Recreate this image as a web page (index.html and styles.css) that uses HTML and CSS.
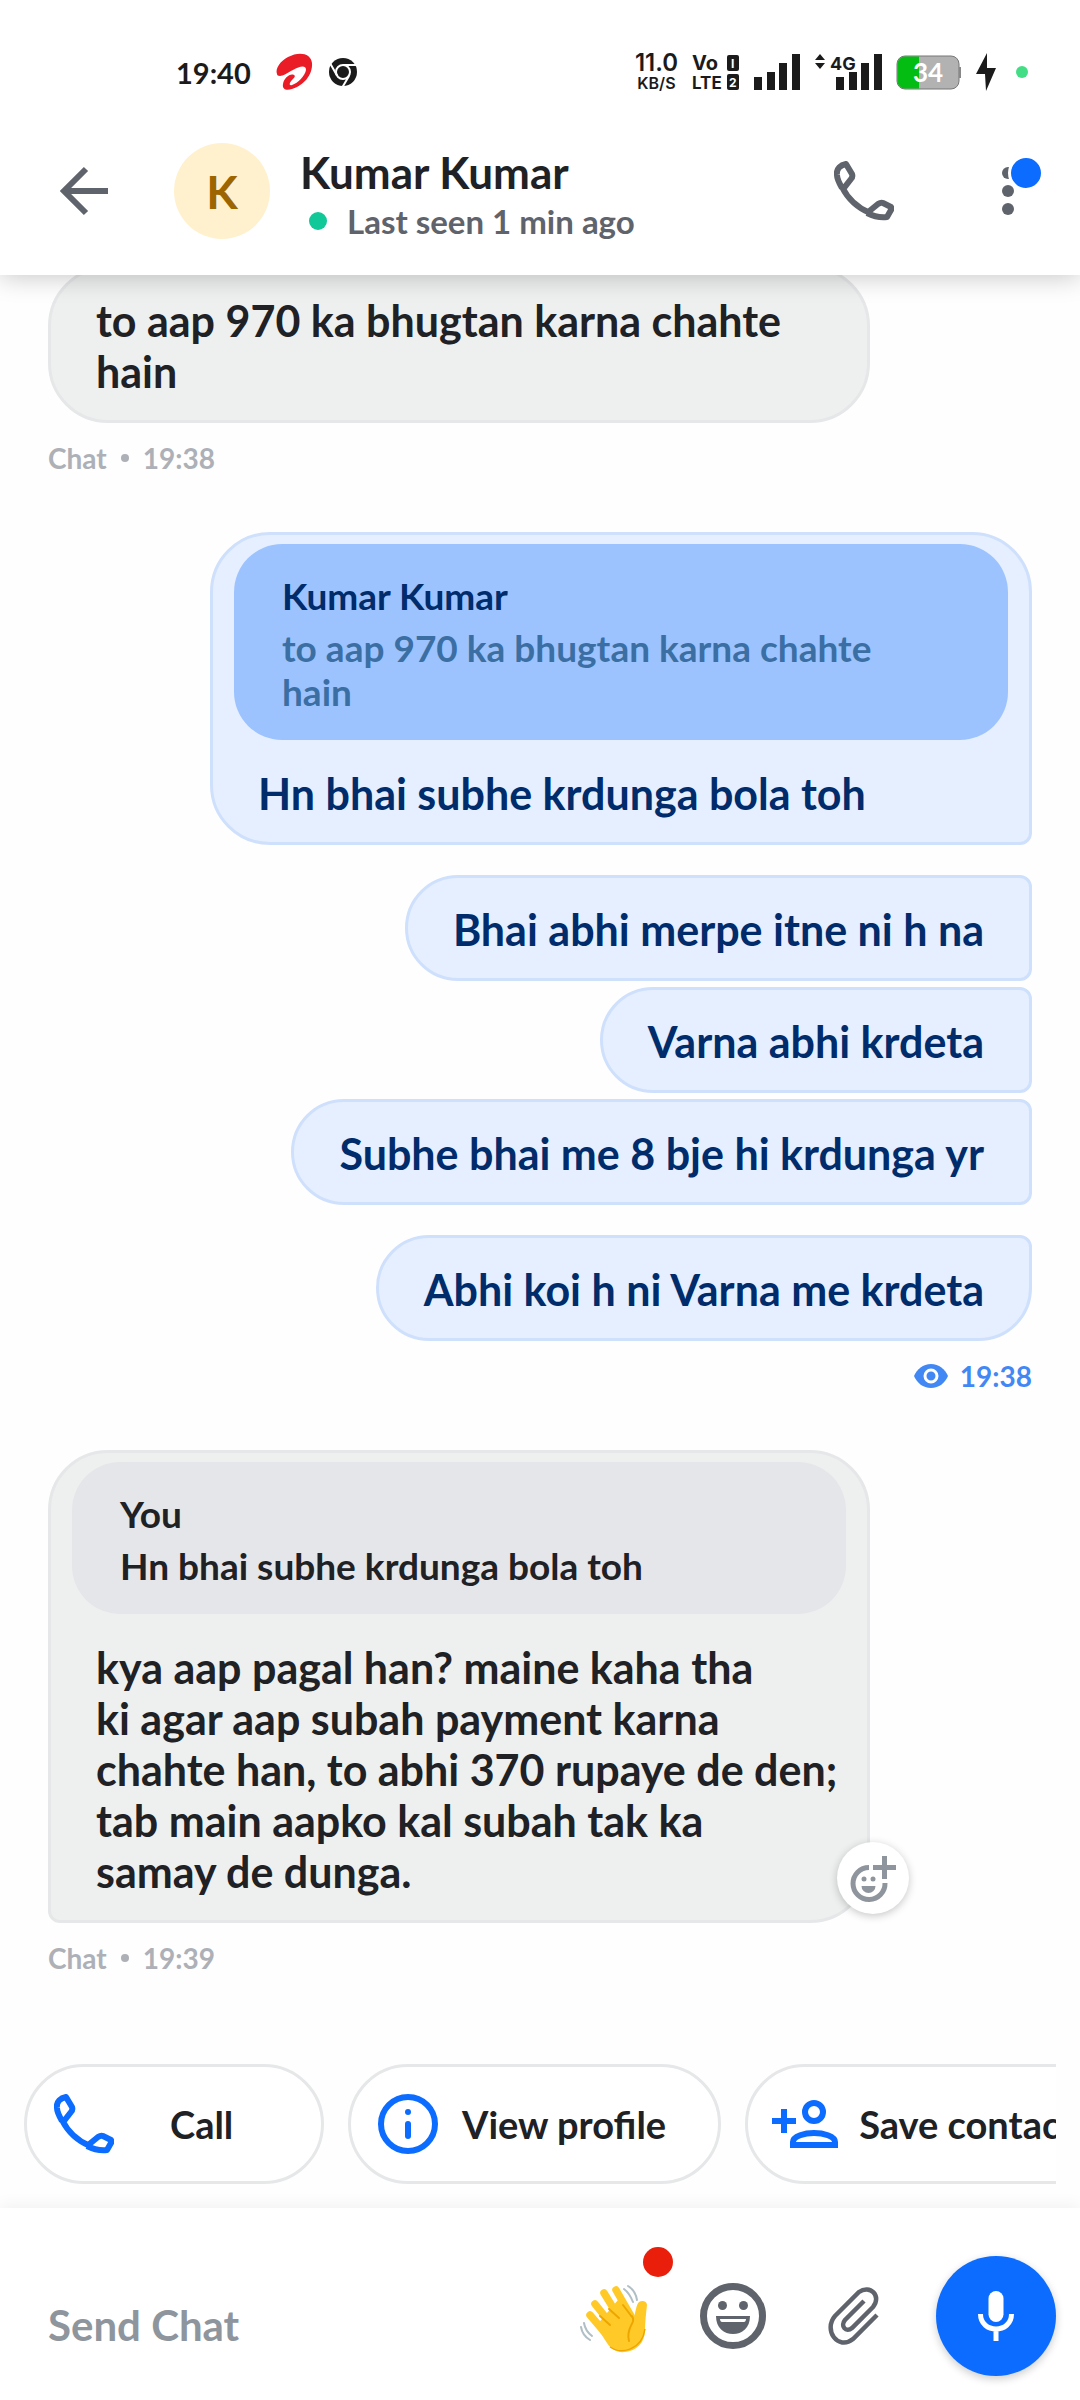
FILE: index.html
```
<!DOCTYPE html>
<html lang="hi-Latn">
<head>
<meta charset="utf-8">
<meta name="viewport" content="width=device-width, initial-scale=1">
<title>Kumar Kumar</title>
<link rel="stylesheet" href="styles.css">
</head>
<body>
<svg class="defs" aria-hidden="true">
  <symbol id="phone" viewBox="0 0 60 60"><path d="M3 14C2 7 7 4 12 3l6 10q1 3-1 5l-7 9M8 27C4 20 3 15 3 14M8 26c6 12 16 21 28 26M33 52l11-9q3-2 5-1l8 4q1 2 0 3l-4 7c-8 1-14-1-20-4" fill="none" stroke="currentColor" stroke-width="6" stroke-linejoin="round"/></symbol>
</svg>

<header class="top">
  <div class="status">
    <div class="status-group">
      <span class="clock">19:40</span>
      <svg class="airtel" width="38" height="40" viewBox="0 0 38 40"><path d="M2 22C0 17 5 9 13 5c11-6 23-4 24 6 1 12-9 23-20 26-6 2-10 0-9-5 1-6 7-11 11-9 2 1 0 3-2 5-3 3-3 6 0 5 6-2 13-9 14-15 0-5-6-4-13 0-6 3-10 6-13 6-2 0-3-1-3-2z" fill="#ea1c26"/></svg>
      <svg width="28" height="28" viewBox="0 0 28 28"><circle cx="14" cy="14" r="14" fill="#1b1b1b"/><circle cx="14" cy="14" r="7" fill="none" stroke="#fff" stroke-width="2"/><path d="M14 7h13M8 17.500L1.500 6M20 18l-6.500 11" stroke="#fff" stroke-width="2"/></svg>
    </div>
    <div class="status-group status-right">
      <span class="speed"><b>11.0</b><span>KB/S</span></span>
      <svg width="48" height="38" viewBox="0 0 48 38" class="status-text"><text x="0" y="17" font-size="20">Vo</text><text x="0" y="36" font-size="17">LTE</text><rect x="35" y="2" width="12" height="16" rx="2"/><rect x="35" y="21" width="12" height="16" rx="2"/><text x="39" y="15" font-size="12" fill="#fff">I</text><text x="37" y="34" font-size="12" fill="#fff">2</text></svg>
      <svg width="46" height="38" viewBox="0 0 46 38"><path d="M0 24h8v13H0zM13 19h8v18h-8zM25 10h8v27h-8zM38 1h8v36h-8z" fill="#1b1b1b"/></svg>
      <svg width="68" height="38" viewBox="0 0 68 38" class="status-text"><path d="M1 7l5-6 5 6zM1 10l5 6 5-6z"/><text x="16" y="17" font-size="18">4G</text><path d="M22 24h8v13h-8zM35 19h8v18h-8zM47 10h8v27h-8zM60 1h8v36h-8z"/></svg>
      <svg width="66" height="38" viewBox="0 0 66 38" class="battery"><rect x="1" y="3" width="62" height="33" rx="8" fill="#b2b2b2" stroke="#777"/><path d="M63 14h2v11h-2z" fill="#888"/><path d="M9 3.500h14v32H9a7.500 7.500 0 0 1-7.500-7.500V11A7.500 7.500 0 0 1 9 3.500z" fill="#03bd12"/><text x="32" y="29" font-size="26" text-anchor="middle" fill="#fff">34</text></svg>
      <svg width="20" height="38" viewBox="0 0 20 38"><path d="M11 0L0 21h9l1 17 10-23h-9z" fill="#1b1b1b"/></svg>
      <span class="live-dot"></span>
    </div>
  </div>
  <div class="contact-bar">
    <button class="icon-btn back" aria-label="Back"><svg width="48" height="48" viewBox="0 0 48 48"><path d="M26 2L4 24l22 22M4 24h44" fill="none" stroke="currentColor" stroke-width="6"/></svg></button>
    <span class="avatar">K</span>
    <div class="contact">
      <h1>Kumar Kumar</h1>
      <p class="seen">Last seen 1 min ago</p>
    </div>
    <button class="icon-btn" aria-label="Call"><svg width="60" height="60"><use href="#phone"/></svg></button>
    <button class="icon-btn more" aria-label="More options"><svg width="12" height="48" viewBox="0 0 12 48"><circle cx="6" cy="6" r="6"/><circle cx="6" cy="24" r="6"/><circle cx="6" cy="42" r="6"/></svg><span class="badge"></span></button>
  </div>
</header>

<main class="chat">
  <div class="group first">
    <div class="bubble in wide"><p>to aap 970 ka bhugtan karna chahte<br>hain</p></div>
  </div>
  <div class="meta">Chat <i></i> 19:38</div>

  <div class="bubble out wide quoted">
    <blockquote><cite>Kumar Kumar</cite><p>to aap 970 ka bhugtan karna chahte<br>hain</p></blockquote>
    <p>Hn bhai subhe krdunga bola toh</p>
  </div>
  <div class="group sent">
    <div class="bubble out mid"><p>Bhai abhi merpe itne ni h na</p></div>
    <div class="bubble out mid"><p>Varna abhi krdeta</p></div>
    <div class="bubble out mid"><p>Subhe bhai me 8 bje hi krdunga yr</p></div>
  </div>
  <div class="bubble out mid last"><p>Abhi koi h ni Varna me krdeta</p></div>
  <div class="meta read"><svg width="34" height="24" viewBox="0 0 34 24"><path d="M17 0C9 0 3 5 0 12c3 7 9 12 17 12s14-5 17-12C31 5 25 0 17 0z" fill="currentColor"/><circle cx="17" cy="12" r="6" fill="currentColor" stroke="#fff" stroke-width="3"/></svg>19:38</div>

  <div class="bubble in wide quoted">
    <blockquote><cite>You</cite><p>Hn bhai subhe krdunga bola toh</p></blockquote>
    <p>kya aap pagal han? maine kaha tha<br>ki agar aap subah payment karna<br>chahte han, to abhi 370 rupaye de den;<br>tab main aapko kal subah tak ka<br>samay de dunga.</p>
    <button class="react" aria-label="Add reaction"><svg width="48" height="48" viewBox="0 0 48 48"><g fill="none" stroke="currentColor" stroke-width="5"><path d="M20 13.500a16 16 0 1 0 16 15.500"/><path d="M35.500 2v23M24 13.500h23"/></g><circle cx="15" cy="25" r="2.500" fill="currentColor"/><circle cx="24" cy="25" r="2.500" fill="currentColor"/><path d="M12.500 32h14a7 7 0 0 1-14 0z" fill="currentColor"/></svg></button>
  </div>
  <div class="meta">Chat <i></i> 19:39</div>

  <nav class="chips">
    <button class="chip call"><svg width="60" height="60"><use href="#phone"/></svg><span>Call</span></button>
    <button class="chip"><svg width="60" height="60" viewBox="0 0 60 60"><circle cx="30" cy="30" r="27" fill="none" stroke="currentColor" stroke-width="6"/><circle cx="30" cy="18" r="3" fill="currentColor"/><path d="M30 30v12" stroke="currentColor" stroke-width="6" stroke-linecap="round"/></svg><span>View profile</span></button>
    <button class="chip save"><svg width="66" height="48" viewBox="0 0 66 48"><g fill="none" stroke="currentColor" stroke-width="6"><path d="M12 9v24M0 21h24"/><circle cx="42" cy="12" r="9"/><path d="M21 45v-3c0-6 12-9 21-9s21 3 21 9v3z"/></g></svg><span>Save contact</span></button>
  </nav>
</main>

<footer class="composer">
  <input type="text" class="message" aria-label="Message" placeholder="Send Chat">
  <button class="icon-btn wave" aria-label="Send a wave">
    <svg width="68" height="68" viewBox="0 0 68 68"><g fill="none" stroke="#b0bec5" stroke-width="2" stroke-linecap="round"><path d="M48 1c5 3 8 8 9 14M44 4c4 3 7 8 9 13M4 38c1 6 4 10 8 13M1 42c1 6 4 10 9 13"/></g><g stroke="#ffc928" stroke-width="7.500" stroke-linecap="round" fill="none"><path d="M36 5l15 26M24 8l16 26M15 19l16 20M10 30l17 20"/></g><path d="M16 41l22-26 16 17c2-6 2-12 5-15 3-2 8-1 8 3-1 9-2 17-2 25 0 13-9 21-20 22-8 1-14-3-18-9z" fill="#ffc928"/><path d="M52 31c5 7-7 11-3 25M29 24l10 9M20 31l10 9M43 20l9 12" fill="none" stroke="#eda600" stroke-width="2" stroke-linecap="round"/><path d="M30 62c11 8 32 3 35-18" fill="none" stroke="#eda600" stroke-width="1.500"/></svg>
    <span class="alert"></span>
  </button>
  <button class="icon-btn smile" aria-label="Emoji"><svg width="66" height="66" viewBox="0 0 66 66"><circle cx="33" cy="33" r="29.500" fill="none" stroke="currentColor" stroke-width="7"/><circle cx="22.500" cy="22.500" r="4.500"/><circle cx="43.500" cy="22.500" r="4.500"/><path d="M16 33h34c0 12-8 18-17 18s-17-6-17-18z"/><path d="M20 36h26c0 2-1 3-2 3H22c-1 0-2-1-2-3z" fill="#fff"/></svg></button>
  <button class="icon-btn clip" aria-label="Attach file"><svg width="52" height="58" viewBox="0 0 52 58"><path d="M36 14L17 33c-5 6 1 13 7 8L45 20C54 9 42-3 31 5L7 29C-5 43 10 64 25 52l24-24" fill="none" stroke="currentColor" stroke-width="4.500"/></svg></button>
  <button class="mic" aria-label="Record voice message"><svg width="36" height="50" viewBox="0 0 36 50"><rect x="10.500" y="0" width="15" height="31" rx="7.500" fill="#fff"/><path d="M2.500 23c0 20 31 20 31 0M18 38v12" fill="none" stroke="#fff" stroke-width="5"/></svg></button>
</footer>
</body>
</html>
```
FILE: styles.css
```
* { box-sizing: border-box; }

body {
  margin: 0;
  min-height: 100vh;
  display: flex;
  flex-direction: column;
  overflow-x: hidden;
  background: #fefefe;
  color: #202125;
  font-family: Lato, "Noto Sans", sans-serif;
  font-weight: 700;
}

p, h1, blockquote { margin: 0; }

button {
  margin: 0;
  padding: 0;
  border: 0;
  background: none;
  color: inherit;
  font: inherit;
}

svg { display: block; flex: none; overflow: visible; }
.defs { position: absolute; width: 0; height: 0; }

/* Header */
.top {
  position: relative;
  z-index: 1;
  background: #fff;
  box-shadow: 0 2px 24px rgba(0, 0, 0, 0.22);
}

.status {
  display: flex;
  justify-content: space-between;
  align-items: center;
  height: 96px;
  padding: 48px 52px 0 176px;
}

.status-group { display: flex; align-items: center; gap: 16px; }
.status-group .airtel { margin-left: 8px; }
.status-right { gap: 14px; font-family: Inter, sans-serif; }
.clock { font-size: 29px; color: #1b1b1b; }

.speed {
  display: flex;
  flex-direction: column;
  align-items: center;
  font-size: 16px;
  line-height: 18px;
  font-weight: 600;
  color: #1b1b1b;
}

.speed b { font-size: 24px; line-height: 22px; font-weight: 600; }
.status-text { fill: #1b1b1b; }
.battery { font-family: Lato, sans-serif; }
.live-dot { width: 12px; height: 12px; margin-left: 6px; border-radius: 50%; background: #42dd84; }

.contact-bar {
  display: flex;
  align-items: center;
  padding: 47px 66px 36px 60px;
  color: #5f636b;
}

.icon-btn { position: relative; display: grid; place-items: center; flex: none; color: #5f636b; }
.icon-btn svg { fill: currentColor; }

.avatar {
  display: grid;
  place-items: center;
  flex: none;
  width: 96px;
  height: 96px;
  margin: 0 30px 0 66px;
  border-radius: 50%;
  background: #fff1cd;
  color: #9c6500;
  font-size: 46px;
}

.contact { flex: 1; margin-bottom: -6px; padding-top: 4px; }
.contact h1 { font-size: 44px; line-height: 50px; color: #202125; }
.seen { display: flex; align-items: center; font-size: 33px; line-height: 48px; }

.seen::before {
  content: "";
  width: 18px;
  height: 18px;
  margin: 0 20px 0 9px;
  border-radius: 50%;
  background: #11c898;
}

.more { margin-left: 108px; }

.badge {
  position: absolute;
  left: 6px;
  top: -12px;
  width: 36px;
  height: 36px;
  border: 3px solid #fff;
  border-radius: 50%;
  background: #0b6cff;
}

/* Conversation */
.chat {
  flex: 1;
  display: flex;
  flex-direction: column;
  align-items: flex-start;
  padding: 0 48px;
}

.bubble {
  position: relative;
  padding: 26px 45px 23px;
  border: 3px solid;
  border-radius: 60px;
  font-size: 43px;
  line-height: 51px;
}

.wide { width: calc(100% - 162px); }
.in { background: #eef0f0; border-color: #e5e7e8; }
.out { align-self: flex-end; background: #e5efff; border-color: #cfe0fc; color: #002c6b; }

.group { display: flex; flex-direction: column; gap: 6px; width: 100%; }
.first { margin-top: -9px; }
.sent { margin: 30px 0; }
.mid { border-radius: 53px 12px 12px 53px; }
.last { border-radius: 53px 12px 53px 53px; }

.quoted { padding: 9px 21px 23px; border-bottom-right-radius: 12px; }
.quoted.in { border-radius: 60px 60px 60px 12px; }
.quoted > p { padding-left: 24px; }

blockquote {
  margin-bottom: 28px;
  padding: 30px 48px 26px;
  border-radius: 48px;
  font-size: 37px;
  line-height: 44px;
}

cite { display: block; margin-bottom: 8px; font-style: normal; }
.in blockquote { background: #e5e6e9; }
.out blockquote { background: #9dc3ff; }
.out blockquote p { color: #3b6fa3; }

.meta {
  display: flex;
  align-items: center;
  gap: 14px;
  margin: 17px 0 56px;
  font-size: 28px;
  line-height: 36px;
  color: #adb0b6;
}

.meta i { width: 8px; height: 8px; border-radius: 50%; background: currentColor; }

.read {
  align-self: flex-end;
  gap: 12px;
  color: #4288f5;
}

.react {
  position: absolute;
  right: -42px;
  bottom: 6px;
  display: grid;
  place-items: center;
  width: 72px;
  height: 72px;
  border-radius: 50%;
  background: #fff;
  color: #8e959d;
  box-shadow: 0 2px 9px rgba(0, 0, 0, 0.22);
}

.chips {
  display: flex;
  gap: 24px;
  align-self: stretch;
  margin: auto -24px 24px;
  overflow: hidden;
}

.chip {
  display: flex;
  align-items: center;
  flex: none;
  gap: 24px;
  height: 120px;
  padding: 0 52px 0 27px;
  border: 3px solid #e5e7e8;
  border-radius: 60px;
  background: #fff;
  font-size: 38px;
  white-space: nowrap;
}

.chip svg { color: #0b6cff; }
.call { width: 300px; gap: 56px; }
.save { padding-left: 24px; gap: 21px; }

/* Composer */
.composer {
  display: flex;
  align-items: center;
  gap: 56px;
  height: 192px;
  padding: 24px 24px 0 48px;
  background: #fff;
  box-shadow: 0 -2px 16px rgba(0, 0, 0, 0.06);
}

.message {
  flex: 1;
  min-width: 0;
  padding: 18px 0 0;
  border: 0;
  outline: 0;
  background: none;
  font: inherit;
  font-size: 42px;
  color: inherit;
}

.message::placeholder { color: #8e959d; opacity: 1; }

.alert {
  position: absolute;
  left: 63px;
  top: -38px;
  width: 30px;
  height: 30px;
  border-radius: 50%;
  background: #e91f0b;
}

.wave { margin-top: 6px; }
.smile { margin-left: -4px; }
.clip { margin-left: 6px; }

.mic {
  display: grid;
  place-items: center;
  flex: none;
  width: 120px;
  height: 120px;
  border-radius: 50%;
  background: #0b6cff;
  box-shadow: 0 3px 9px rgba(0, 0, 0, 0.2);
}
```
